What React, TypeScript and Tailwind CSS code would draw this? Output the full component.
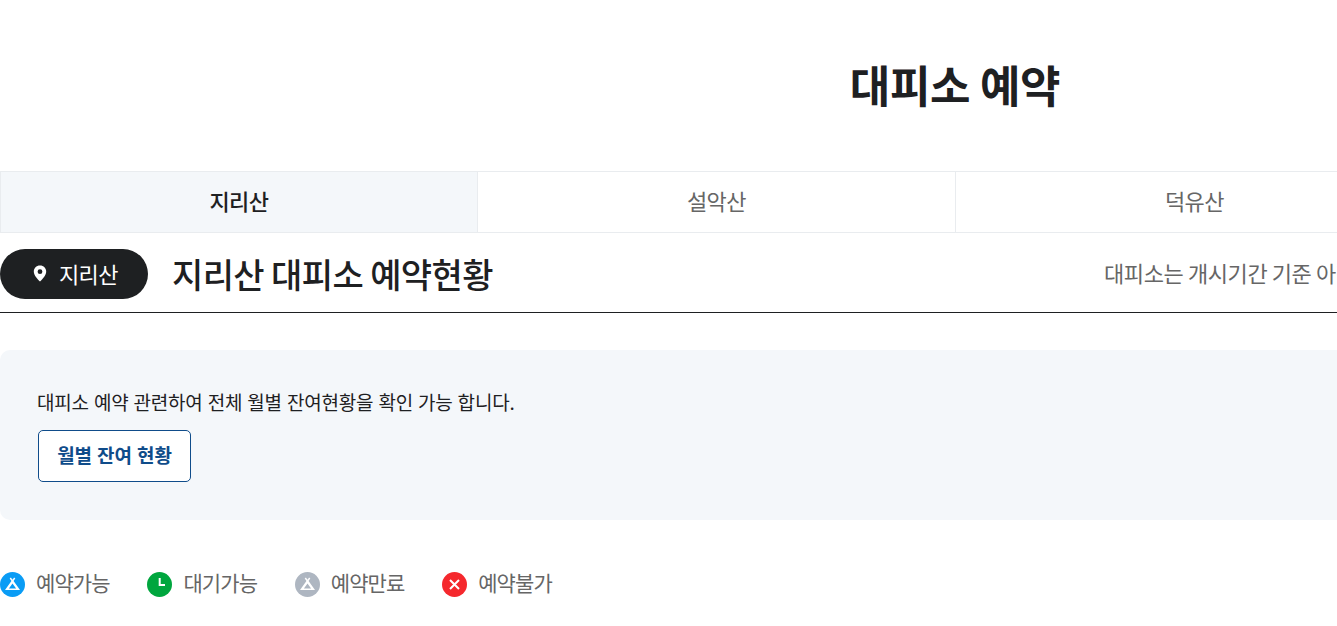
const tabs = ["지리산", "설악산", "덕유산", "소백산"];

const TentIcon = ({ bg }: { bg: string }) => (
  <svg width="25" height="25" viewBox="0 0 25 25" className="shrink-0">
    <circle cx="12.5" cy="12.5" r="12.5" fill={bg} />
    <path d="M10.3 6 L12.5 9.2 M14.7 6 L12.5 9.2" fill="none" stroke="#fff" strokeWidth="1.5" />
    <path d="M12.5 7.5 L20 18 H5 Z M12.5 11.5 L8.9 16.4 H16.1 Z" fill="#fff" fillRule="evenodd" />
  </svg>
);

const ClockIcon = () => (
  <svg width="25" height="25" viewBox="0 0 25 25" className="shrink-0">
    <circle cx="12.5" cy="12.5" r="12.5" fill="#00a63e" />
    <path d="M12.7 6 V13 H18" fill="none" stroke="#fff" strokeWidth="2" />
  </svg>
);

const CloseIcon = () => (
  <svg width="25" height="25" viewBox="0 0 25 25" className="shrink-0">
    <circle cx="12.5" cy="12.5" r="12.5" fill="#f5282d" />
    <path d="M8 8 L17 17 M17 8 L8 17" fill="none" stroke="#fff" strokeWidth="2" />
  </svg>
);

const PinIcon = () => (
  <svg width="14" height="17" viewBox="0 0 14 17" className="shrink-0">
    <path
      d="M7 0.5 C3.3 0.5 0.8 3.2 0.8 6.5 C0.8 10.5 5 14.5 7 16.5 C9 14.5 13.2 10.5 13.2 6.5 C13.2 3.2 10.7 0.5 7 0.5 Z M7 4.3 A2.4 2.4 0 1 1 7 9.1 A2.4 2.4 0 1 1 7 4.3 Z"
      fill="#fff"
      fillRule="evenodd"
    />
  </svg>
);

const legend = [
  { label: "예약가능", icon: <TentIcon bg="#0a9cf5" /> },
  { label: "대기가능", icon: <ClockIcon /> },
  { label: "예약만료", icon: <TentIcon bg="#aeb6c1" /> },
  { label: "예약불가", icon: <CloseIcon /> },
];

const App = () => {
  return (
    <div className="h-[626px] overflow-hidden bg-white font-['Noto_Sans_CJK_KR','Noto_Sans',sans-serif] text-[#1e2022]">
      <div className="w-[1912px]">
        <h1 className="flex h-[171px] items-center justify-center pr-[2px] pb-[4px] text-[44px] font-bold tracking-[-0.3px]">
          대피소 예약
        </h1>

        <ul className="grid h-[62px] grid-cols-4 border-y border-[#e9ecef]">
          {tabs.map((tab, i) => (
            <li
              key={tab}
              className={
                i === 0
                  ? "flex items-center justify-center border-x border-[#e9ecef] bg-[#f4f7fa] pb-[3px] text-[22px] font-medium tracking-[-0.5px]"
                  : "flex items-center justify-center border-r border-[#e9ecef] pb-[3px] text-[22px] tracking-[-0.5px] text-[#666]"
              }
            >
              {tab}
            </li>
          ))}
        </ul>

        <div className="flex h-[80px] items-center justify-between border-b border-[#1e2022] pt-[3px]">
          <div className="flex items-center gap-6">
            <span className="flex h-[50px] w-[148px] items-center justify-center gap-[12px] rounded-full bg-[#1e2022] pb-[2px] pl-[3px] text-[22px] tracking-[-0.5px] text-white">
              <PinIcon />
              지리산
            </span>
            <h2 className="pb-[1px] text-[34px] font-medium tracking-[-0.6px]">지리산 대피소 예약현황</h2>
          </div>
          <p className="w-[808px] whitespace-nowrap pb-[3px] text-[22px] tracking-[-0.4px] text-[#666]">
            대피소는 개시기간 기준 아래 일정으로 예약이 가능합니다.
          </p>
        </div>

        <div className="mt-[37px] h-[170px] rounded-[10px] bg-[#f4f7fa] px-[38px] pt-[37px]">
          <p className="-ml-[1px] text-[19px] leading-[30px] tracking-[-0.2px] [word-spacing:1px]">
            대피소 예약 관련하여 전체 월별 잔여현황을 확인 가능 합니다.
          </p>
          <button className="mt-[13px] flex h-[52px] w-[153px] items-center justify-center rounded-[5px] border border-[#0f4c8a] bg-white pb-[2px] text-[19px] font-bold tracking-[-0.1px] text-[#0f4c8a] [word-spacing:1px]">
            월별 잔여 현황
          </button>
        </div>

        <ul className="mt-[47px] flex gap-[37.4px]">
          {legend.map((item) => (
            <li key={item.label} className="flex w-[110px] items-center gap-[11px] text-[21px] tracking-[-0.9px] text-[#666]">
              {item.icon}
              <span className="whitespace-nowrap pb-[4px]">{item.label}</span>
            </li>
          ))}
        </ul>
      </div>
    </div>
  );
};

export default App;
